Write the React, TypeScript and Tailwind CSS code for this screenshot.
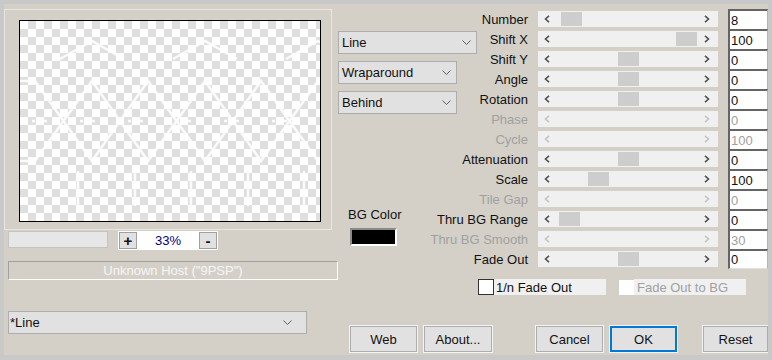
import type { ReactNode } from "react";

type Param = { label: string; value: string; thumb?: number };

const params: Param[] = [
    { label: "Number", value: "8", thumb: 23 },
    { label: "Shift X", value: "100", thumb: 138 },
    { label: "Shift Y", value: "0", thumb: 80 },
    { label: "Angle", value: "0", thumb: 80 },
    { label: "Rotation", value: "0", thumb: 80 },
    { label: "Phase", value: "0" },
    { label: "Cycle", value: "100" },
    { label: "Attenuation", value: "0", thumb: 80 },
    { label: "Scale", value: "100", thumb: 50 },
    { label: "Tile Gap", value: "0" },
    { label: "Thru BG Range", value: "0", thumb: 21 },
    { label: "Thru BG Smooth", value: "30" },
    { label: "Fade Out", value: "0", thumb: 80 },
];

function DropArrow() {
    return (
        <svg width="9" height="5" viewBox="0 0 9 5" className="text-[#606060]">
            <polyline points="0.5,0.5 4.5,4.5 8.5,0.5" fill="none" stroke="currentColor" strokeWidth="1" />
        </svg>
    );
}

function Select({ label, className }: { label: string; className: string }) {
    return (
        <div className={`flex h-[23px] items-center justify-between border border-[#adadad] bg-[#e1e1e1] pr-[5px] ${className}`}>
            <span>{label}</span>
            <DropArrow />
        </div>
    );
}

function Chevron({ dir, off }: { dir: "l" | "r"; off: boolean }) {
    const pts = dir === "l" ? "5,0.8 1.5,4 5,7.2" : "1,0.8 4.5,4 1,7.2";
    return (
        <svg width="6" height="8" viewBox="0 0 6 8" className={off ? "text-[#c4c4c4]" : "text-[#505050]"}>
            <polyline points={pts} fill="none" stroke="currentColor" strokeWidth="1.6" />
        </svg>
    );
}

function Track({ thumb }: { thumb?: number }) {
    const off = thumb === undefined;
    return (
        <div className="relative flex h-[16px] w-[180px] items-center justify-between bg-[#f0f0f0] pl-[6px] pr-[8px]">
            <Chevron dir="l" off={off} />
            {!off && <div className="absolute top-[1px] h-[14px] w-[21px] bg-[#cdcdcd]" style={{ left: thumb }} />}
            <Chevron dir="r" off={off} />
        </div>
    );
}

function Button({ children, className = "" }: { children: ReactNode; className?: string }) {
    return (
        <div className={`flex h-[26px] items-center justify-center bg-[#e1e1e1] shadow-[0_0_0_1px_#f4f4f4] ${className}`}>
            {children}
        </div>
    );
}

function Preview() {
    const a = "0,140 15,140 72,60 128,140 185,60 241,140 298,60 320,90";
    const b = "0,60 15,60 72,140 128,60 185,140 241,60 298,140 320,110";
    return (
        <div className="relative ml-[14px] mt-[10px] h-[202px] w-[302px] overflow-hidden border border-black bg-[repeating-conic-gradient(#dfdfdf_0%_25%,#ffffff_0%_50%)] bg-[length:16px_16px]">
            <svg width="300" height="200" className="absolute inset-0 opacity-90">
                <g fill="none" stroke="#ffffff" strokeWidth="2.5">
                    <polyline points={a} />
                    <polyline points={b} />
                    <polyline points="40,38 72,20 104,38" />
                    <polyline points="153,38 185,20 217,38" />
                    <polyline points="266,38 298,20 330,38" />
                    <line x1="0" y1="100" x2="300" y2="100" strokeDasharray="3 9" />
                    <line x1="58" y1="150" x2="58" y2="185" />
                    <line x1="115" y1="150" x2="115" y2="185" />
                    <line x1="171" y1="150" x2="171" y2="185" />
                    <line x1="228" y1="150" x2="228" y2="185" />
                    <line x1="284" y1="150" x2="284" y2="185" />
                </g>
            </svg>
        </div>
    );
}

export default function App() {
    return (
        <div className="h-[360px] w-[772px] overflow-hidden border-x-4 border-t-4 border-b-[5px] border-[#c9c9c9] bg-[#d4d0c8] font-['Liberation_Sans',Arial,sans-serif] text-[13px] leading-[15px] text-[#111111]">
            <div className="flex">
                {/* left column */}
                <div className="flex w-[334px] shrink-0 flex-col">
                    <div className="mt-[5px] h-[221px] w-[328px] border border-[#e9e7e2]">
                        <Preview />
                    </div>
                    <div className="ml-[4px] mt-[1px] flex items-start">
                        <div className="h-[17px] w-[100px] border border-[#c4c4c4] bg-[#e6e6e6]" />
                        <div className="ml-[10px] flex h-[19px] w-[100px] items-center justify-between bg-white px-[1px]">
                            <div className="flex h-[17px] w-[18px] items-center justify-center border border-[#a0a0a0] bg-[#e1e1e1] text-[15px] font-bold">+</div>
                            <span className="text-[#000080]">33%</span>
                            <div className="flex h-[17px] w-[18px] items-center justify-center border border-[#a0a0a0] bg-[#e1e1e1] text-[15px] font-bold">-</div>
                        </div>
                    </div>
                    <div className="ml-[4px] mt-[11px] flex h-[19px] w-[330px] items-center justify-center border border-b-white border-l-[#a0a0a0] border-r-white border-t-[#a0a0a0] text-[#f6f6f6]">
                        Unknown Host ("9PSP")
                    </div>
                    <div className="ml-[4px] mt-[31px] flex h-[23px] w-[299px] items-center justify-between border border-[#adadad] bg-[#e1e1e1] pl-[1px] pr-[14px]">
                        <span>*Line</span>
                        <DropArrow />
                    </div>
                </div>

                {/* right area */}
                <div className="flex w-[430px] flex-col">
                    <div className="flex">
                        <div className="flex w-[90px] flex-col">
                            <Select label="Line" className="mt-[27px] w-[139px] pl-[3px]" />
                            <Select label="Wraparound" className="mt-[7px] w-[119px] pl-[3px]" />
                            <Select label="Behind" className="mt-[7px] w-[119px] pl-[3px]" />
                            <span className="ml-[10px] mt-[93px]">BG Color</span>
                            <div className="ml-[12px] mt-[6px] h-[18px] w-[47px] border-2 border-b-white border-l-[#8a8a8a] border-r-white border-t-[#8a8a8a] bg-black" />
                        </div>
                        <div className="flex w-[340px] flex-col pt-[5px]">
                            {params.map((p, i) => {
                                const off = p.thumb === undefined;
                                return (
                                    <div key={p.label} className="flex h-[20px] items-center">
                                        <div className={`flex w-[100px] justify-end whitespace-nowrap ${off ? "text-[#a0a0a0]" : ""}`}>
                                            {p.label}
                                        </div>
                                        <div className="ml-[10px]">
                                            <Track thumb={p.thumb} />
                                        </div>
                                        <div
                                            className={`ml-[10px] flex h-[20px] w-[40px] items-center border-l-2 border-r border-t-2 border-l-[#646464] border-r-[#b4b4b4] border-t-[#646464] bg-white pl-[1px] ${i === params.length - 1 ? "border-b border-b-[#e0e0e0]" : ""} ${off ? "text-[#a0a0a0]" : ""}`}
                                        >
                                            {p.value}
                                        </div>
                                    </div>
                                );
                            })}
                        </div>
                    </div>

                    <div className="ml-[140px] mt-[10px] flex items-center">
                        <div className="h-[16px] w-[16px] border border-[#333333] bg-white" />
                        <div className="flex h-[16px] w-[112px] items-center bg-[#f0f0f0] pl-[2px]">1/n Fade Out</div>
                        <div className="ml-[13px] h-[15px] w-[15px] bg-white" />
                        <div className="flex h-[16px] w-[112px] items-center bg-[#f0f0f0] pl-[3px] text-[#a0a0a0]">Fade Out to BG</div>
                    </div>

                    <div className="ml-[12px] mt-[31px] flex">
                        <Button className="w-[67px] border border-[#adadad]">Web</Button>
                        <Button className="ml-[7px] w-[68px] border border-[#adadad]">About...</Button>
                        <Button className="ml-[44px] w-[67px] border border-[#adadad]">Cancel</Button>
                        <Button className="ml-[7px] w-[67px] border-2 border-[#0078d7]">OK</Button>
                        <Button className="ml-[26px] w-[65px] border border-[#adadad]">Reset</Button>
                    </div>
                </div>
            </div>
        </div>
    );
}
